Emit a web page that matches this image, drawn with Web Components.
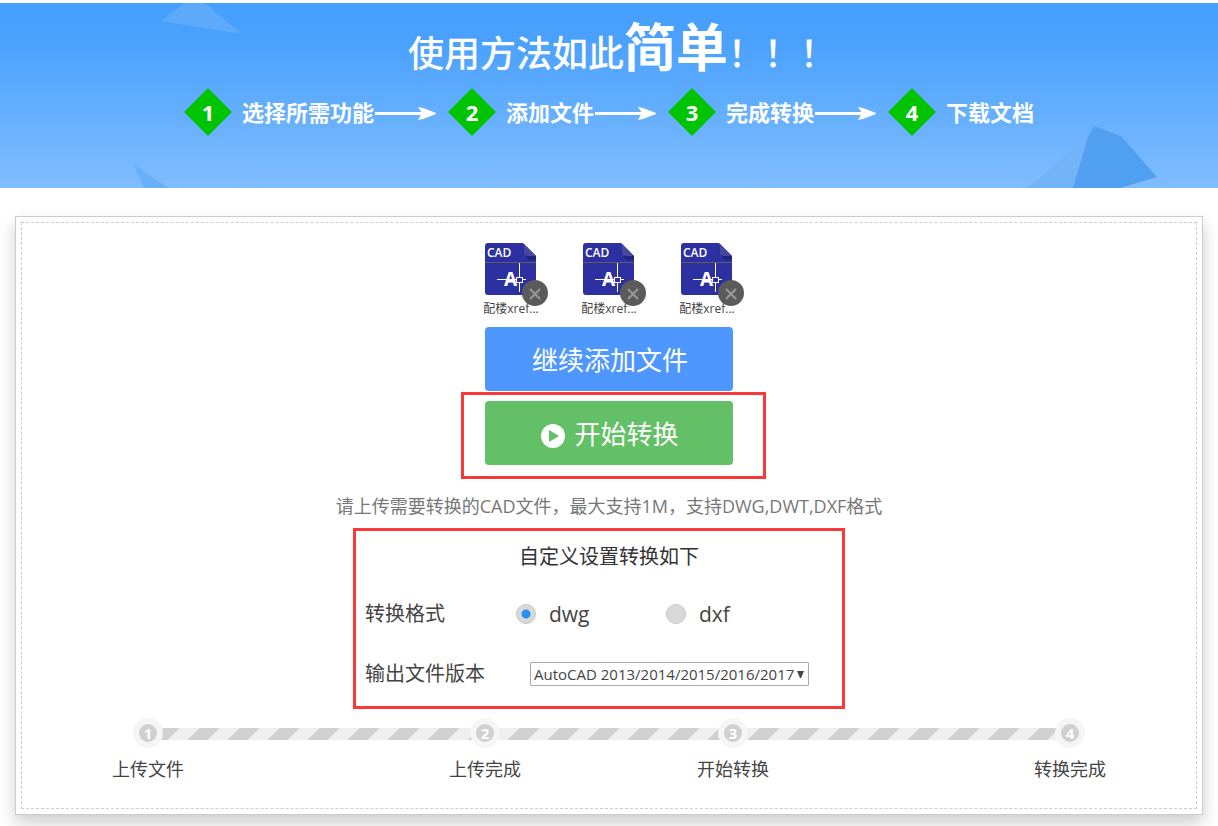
<!DOCTYPE html>
<html lang="zh-CN">
<head>
<meta charset="utf-8">
<meta name="viewport" content="width=device-width, initial-scale=1">
<title>CAD版本转换</title>
<style>
  body {
    margin: 0;
    padding-top: 3px;
    background: #fff;
    color: #444;
    font-family: "Open Sans", "Noto Sans CJK SC", sans-serif;
    font-size: 18px;
  }
</style>
</head>
<body>
<usage-banner>
  <usage-step number="1" arrow>选择所需功能</usage-step>
  <usage-step number="2" arrow>添加文件</usage-step>
  <usage-step number="3" arrow>完成转换</usage-step>
  <usage-step number="4">下载文档</usage-step>
</usage-banner>
<upload-card>
  <cad-file slot="files">配楼xref...</cad-file>
  <cad-file slot="files">配楼xref...</cad-file>
  <cad-file slot="files">配楼xref...</cad-file>
  <action-button slot="actions" color="#4e97ff">继续添加文件</action-button>
  <mark-box class="start" slot="actions">
    <action-button color="#63c066" icon="play">开始转换</action-button>
  </mark-box>
  <span slot="hint">请上传需要转换的CAD文件，最大支持1M，支持DWG,DWT,DXF格式</span>
  <mark-box class="options" slot="settings">
    <convert-settings></convert-settings>
  </mark-box>
  <progress-track slot="progress"></progress-track>
</upload-card>

<script>
class UsageBanner extends HTMLElement {
  constructor() {
    super();
    this.attachShadow({ mode: "open" });
  }

  connectedCallback() {
    this.render();
  }

  templateCSS() {
    return `<style>
      :host {
        display: block;
        position: relative;
        overflow: hidden;
        color: #fff;
        background: linear-gradient(#459ffe, #4aa1fd 20%, #80bdff);
      }

      .shapes {
        position: absolute;
        inset: 0;
        width: 100%;
        height: 100%;
      }

      .content {
        position: relative;
        display: flex;
        flex-direction: column;
        align-items: center;
        gap: 2px;
        padding: 12px 0 52px;
      }

      h1 {
        display: flex;
        align-items: baseline;
        margin: 0;
        padding-left: 26px;
        font-size: 36px;
        font-weight: 500;
        line-height: 64px;
      }

      strong {
        font-size: 52px;
        font-weight: 700;
      }

      .steps {
        display: flex;
        gap: 12px;
      }
    </style>`;
  }

  templateHTML() {
    return `<svg class="shapes" viewBox="0 0 1218 185" preserveAspectRatio="none" aria-hidden="true">
      <path d="M161 18 L182 2 L186 0 H205 L242 31 Z" fill="#5eaafa"/>
      <path d="M133 160 L168 185 H144 Z" fill="#69b0fa"/>
      <path d="M1027 185 L1088 134 L1073 185 Z" fill="#73b4f8"/>
      <path d="M1094 123 L1121 133 L1157 174 L1120 185 H1073 L1088 134 Z" fill="#519ff0"/>
    </svg>
    <div class="content">
      <h1>使用方法如此<strong>简单</strong>！！！</h1>
      <div class="steps"><slot></slot></div>
    </div>`;
  }

  render() {
    this.shadowRoot.innerHTML = `${this.templateCSS()} ${this.templateHTML()}`;
  }
}

class UsageStep extends HTMLElement {
  constructor() {
    super();
    this.attachShadow({ mode: "open" });
  }

  connectedCallback() {
    this.render();
  }

  templateCSS() {
    return `<style>
      :host {
        display: flex;
        align-items: center;
        font-size: 22px;
        font-weight: 700;
        line-height: 48px;
        white-space: nowrap;
      }

      .number {
        width: 48px;
        margin-right: 10px;
        text-align: center;
        background: #00c400;
        clip-path: polygon(50% 0, 100% 50%, 50% 100%, 0 50%);
      }
    </style>`;
  }

  templateHTML() {
    const arrow = `<svg width="62" height="18" viewBox="0 0 62 18" aria-hidden="true">
      <path d="M1 9 H50 V12 H1 Z" fill="#fff"/>
      <path d="M44 4 L49 5 L62 10 V11 L49 16 L44 17 L48 10 Z" fill="#fff"/>
    </svg>`;
    return `<span class="number">${this.getAttribute("number")}</span>
      <slot></slot>
      ${this.hasAttribute("arrow") ? arrow : ""}`;
  }

  render() {
    this.shadowRoot.innerHTML = `${this.templateCSS()} ${this.templateHTML()}`;
  }
}

class UploadCard extends HTMLElement {
  constructor() {
    super();
    this.attachShadow({ mode: "open" });
  }

  connectedCallback() {
    this.render();
  }

  templateCSS() {
    return `<style>
      :host {
        display: block;
        margin: 28px 15px 11px;
        padding: 5px;
        border: 1px solid #ccc;
        box-shadow: 0 8px 16px rgba(0, 0, 0, 0.2);
      }

      .inner {
        display: flex;
        flex-direction: column;
        align-items: center;
        padding: 20px 0 27px;
        border: 1px dashed #ccc;
      }

      .files {
        display: flex;
        gap: 42px;
      }

      .actions {
        display: flex;
        flex-direction: column;
        gap: 10px;
        margin: 9px 0 27px;
      }

      .hint {
        margin: 0 0 22px;
        color: #777;
        line-height: 28px;
      }

      .progress {
        align-self: stretch;
        margin: 29px 90px 0;
      }

      ::slotted(.start) {
        --mark-inset: -9px -33px -14px -24px;
      }

      ::slotted(.options) {
        --mark-inset: -14px 8px -20px -12px;
      }
    </style>`;
  }

  templateHTML() {
    return `<div class="inner">
      <div class="files"><slot name="files"></slot></div>
      <div class="actions"><slot name="actions"></slot></div>
      <p class="hint"><slot name="hint"></slot></p>
      <slot name="settings"></slot>
      <div class="progress"><slot name="progress"></slot></div>
    </div>`;
  }

  render() {
    this.shadowRoot.innerHTML = `${this.templateCSS()} ${this.templateHTML()}`;
  }
}

class CadFile extends HTMLElement {
  constructor() {
    super();
    this.attachShadow({ mode: "open" });
  }

  connectedCallback() {
    this.render();
    this.shadowRoot.querySelector("button").addEventListener("click", () => this.remove());
  }

  templateCSS() {
    return `<style>
      :host {
        display: flex;
        flex-direction: column;
        align-items: center;
        gap: 5px;
        width: 56px;
        font-size: 12px;
        line-height: 18px;
        white-space: nowrap;
      }

      .icon {
        position: relative;
        width: 52px;
        height: 52px;
      }

      button {
        position: absolute;
        right: -11px;
        bottom: -11px;
        width: 26px;
        height: 26px;
        padding: 0;
        border: none;
        border-radius: 50%;
        background: #5b5b5b;
        cursor: pointer;
      }

      svg {
        display: block;
      }
    </style>`;
  }

  templateHTML() {
    return `<div class="icon">
      <svg width="52" height="52" viewBox="0 0 52 52" aria-hidden="true">
        <path d="M3 0 H38 L51 13 V49 Q51 52 48 52 H3 Q0 52 0 49 V3 Q0 0 3 0 Z" fill="#2c30a0"/>
        <path d="M38 6 L51 13 V17 L43 17 Z" fill="#20247f"/>
        <path d="M39 1 L51 13 H43 Q39 13 39 9 Z" fill="#45489f"/>
        <path d="M0 19.500 H51" stroke="#5c5c62"/>
        <text x="2" y="14" fill="#fff" font-size="12" font-weight="600">CAD</text>
        <text x="19" y="43" fill="#fff" font-size="19" font-weight="700">A</text>
        <path d="M12 36.500 H41 M34.500 20 V49" stroke="#fff"/>
        <rect x="31.500" y="34.500" width="6" height="5" fill="#2c30a0" stroke="#fff"/>
      </svg>
      <button type="button" aria-label="删除">
        <svg width="26" height="26" viewBox="0 0 26 26" aria-hidden="true">
          <path d="M8 9 L18 19 M18 9 L8 19" stroke="#999" stroke-width="2"/>
        </svg>
      </button>
    </div>
    <span><slot></slot></span>`;
  }

  render() {
    this.shadowRoot.innerHTML = `${this.templateCSS()} ${this.templateHTML()}`;
  }
}

class ActionButton extends HTMLElement {
  constructor() {
    super();
    this.attachShadow({ mode: "open" });
  }

  connectedCallback() {
    this.render();
  }

  templateCSS() {
    return `<style>
      :host {
        display: block;
      }

      button {
        display: flex;
        align-items: center;
        justify-content: center;
        gap: 9px;
        width: 248px;
        height: 64px;
        padding: 2px 0 0 2px;
        border: none;
        border-radius: 4px;
        background: ${this.getAttribute("color")};
        color: #fff;
        font-family: inherit;
        font-size: 26px;
        line-height: 40px;
        cursor: pointer;
      }
    </style>`;
  }

  templateHTML() {
    const play = `<svg width="24" height="28" viewBox="0 0 24 28" aria-hidden="true">
      <circle cx="12" cy="16" r="12" fill="#fff"/>
      <path d="M8 10 L18 16 L8 22 Z" fill="#63c066"/>
    </svg>`;
    return `<button type="button">
      ${this.getAttribute("icon") === "play" ? play : ""}
      <span><slot></slot></span>
    </button>`;
  }

  render() {
    this.shadowRoot.innerHTML = `${this.templateCSS()} ${this.templateHTML()}`;
  }
}

/* Red frame drawn over its content, its edges set by --mark-inset */
class MarkBox extends HTMLElement {
  constructor() {
    super();
    this.attachShadow({ mode: "open" });
  }

  connectedCallback() {
    this.shadowRoot.innerHTML = `<style>
      :host {
        display: block;
        position: relative;
      }

      :host::after {
        content: "";
        position: absolute;
        inset: var(--mark-inset, 0);
        border: 3px solid #f93838;
        pointer-events: none;
      }
    </style>
    <slot></slot>`;
  }
}

class ConvertSettings extends HTMLElement {
  constructor() {
    super();
    this.attachShadow({ mode: "open" });
  }

  connectedCallback() {
    this.render();
  }

  templateCSS() {
    return `<style>
      :host {
        display: block;
        width: 488px;
        font-size: 20px;
        line-height: 30px;
      }

      h2 {
        margin: 0 0 27px;
        color: #333;
        font-size: 20px;
        font-weight: 400;
        text-align: center;
      }

      .row {
        display: grid;
        grid-template-columns: 151px 150px 1fr;
        align-items: center;
      }

      .row + .row {
        margin-top: 30px;
      }

      .option {
        display: flex;
        align-items: center;
        gap: 13px;
        font-size: 21px;
      }

      input {
        appearance: none;
        width: 20px;
        height: 20px;
        margin: 0;
        border: 1px solid #c6c6c6;
        border-radius: 50%;
        background: #d9d9d9;
      }

      input:checked {
        background: radial-gradient(circle, #2a8ff2 4px, #d9d9d9 5px);
      }

      .select {
        grid-column: 2 / 4;
        display: grid;
        align-items: center;
        justify-self: start;
        width: 279px;
        margin-left: 14px;
      }

      select, .select svg {
        grid-area: 1 / 1;
      }

      select {
        appearance: none;
        width: 100%;
        height: 24px;
        padding: 0 3px;
        border: 1px solid #a9a9a9;
        border-radius: 1px;
        background: #fff;
        color: #444;
        font-family: inherit;
        font-size: 15px;
      }

      .select svg {
        justify-self: end;
        margin-right: 5px;
        pointer-events: none;
      }
    </style>`;
  }

  templateHTML() {
    return `<h2>自定义设置转换如下</h2>
    <div class="row" role="radiogroup" aria-labelledby="format">
      <span id="format">转换格式</span>
      <label class="option"><input type="radio" name="format" value="dwg" checked>dwg</label>
      <label class="option"><input type="radio" name="format" value="dxf">dxf</label>
    </div>
    <div class="row">
      <label for="version">输出文件版本</label>
      <div class="select">
        <select id="version">
          <option>AutoCAD 2013/2014/2015/2016/2017</option>
        </select>
        <svg width="7" height="7" viewBox="0 0 7 7" aria-hidden="true">
          <path d="M0 0 H7 L4 7 H3 Z" fill="#444"/>
        </svg>
      </div>
    </div>`;
  }

  render() {
    this.shadowRoot.innerHTML = `${this.templateCSS()} ${this.templateHTML()}`;
  }
}

class ProgressTrack extends HTMLElement {
  constructor() {
    super();
    this.attachShadow({ mode: "open" });
    this.steps = ["上传文件", "上传完成", "开始转换", "转换完成"];
  }

  connectedCallback() {
    this.render();
  }

  templateCSS() {
    return `<style>
      :host {
        display: block;
        position: relative;
      }

      /* striped bar behind the circles */
      :host::before {
        content: "";
        position: absolute;
        top: 10px;
        left: 48px;
        right: 48px;
        height: 12px;
        background: linear-gradient(135deg, #d0d0d0 25%, #efefef 25%, #efefef 50%, #d0d0d0 50%, #d0d0d0 75%, #efefef 75%);
        background-size: 40px 40px;
      }

      ol {
        position: relative;
        display: grid;
        grid-template-columns: 72px 265fr 72px 176fr 72px 265fr 72px;
        margin: 0;
        padding: 0;
        list-style: none;
      }

      li {
        display: flex;
        flex-direction: column;
        align-items: center;
        gap: 9px;
        line-height: 24px;
        white-space: nowrap;
      }

      li:nth-child(2) {
        grid-column: 3;
      }

      li:nth-child(3) {
        grid-column: 5;
      }

      li:nth-child(4) {
        grid-column: 7;
      }

      .circle {
        width: 18px;
        border: 6px solid #f5f5f5;
        border-radius: 50%;
        background: #d0d0d0;
        color: #fff;
        font-size: 15px;
        font-weight: 700;
        line-height: 18px;
        text-align: center;
      }
    </style>`;
  }

  templateHTML() {
    return `<ol>${this.steps.map((step, i) => `
      <li><span class="circle">${i + 1}</span><span>${step}</span></li>`).join("")}
    </ol>`;
  }

  render() {
    this.shadowRoot.innerHTML = `${this.templateCSS()} ${this.templateHTML()}`;
  }
}

customElements.define("usage-banner", UsageBanner);
customElements.define("usage-step", UsageStep);
customElements.define("upload-card", UploadCard);
customElements.define("cad-file", CadFile);
customElements.define("action-button", ActionButton);
customElements.define("mark-box", MarkBox);
customElements.define("convert-settings", ConvertSettings);
customElements.define("progress-track", ProgressTrack);
</script>
</body>
</html>
